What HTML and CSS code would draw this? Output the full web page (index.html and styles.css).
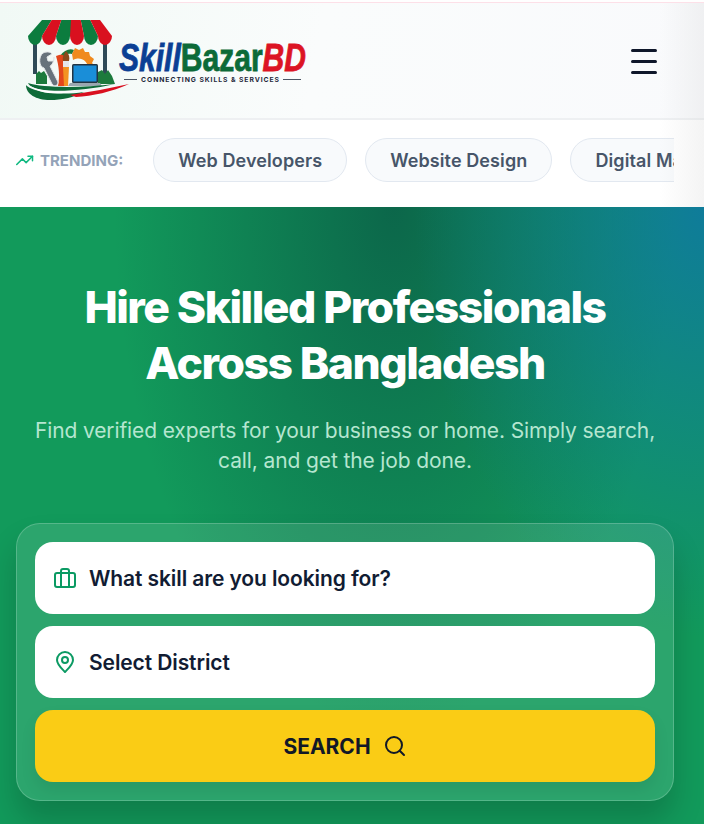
FILE: index.html
```html
<!DOCTYPE html>
<html lang="en">
<head>
    <meta charset="UTF-8" />
    <meta name="viewport" content="width=device-width, initial-scale=1.0" />
    <title>SkillBazarBD - Hire Skilled Professionals</title>
    <link rel="stylesheet" href="styles.css">
</head>
<body>
    <header class="site-header">
        <a class="brand" href="#">
            <svg class="brand-logo" width="290" height="88" viewBox="24 17 290 88">
                <!-- poles and bushes -->
                <rect x="33" y="42" width="4" height="32" fill="#2f4a57"/>
                <rect x="103" y="42" width="4" height="32" fill="#2f4a57"/>
                <path d="M36 84 V74 l3 -3 l2 2 l3 -2 l3 5 V84 Z" fill="#1c7a3c"/>
                <path d="M98 84 V72 l4 -2 l3 4 l3 -4 l4 6 l3 8 Z" fill="#1c7a3c"/>
                <!-- gear -->
                <path d="M60 56 C64 50 70 48 74 50 L72 54 C68 53 65 54 62 58 Z" fill="#1c7a3c"/>
                <path d="M72 54 L75 48 L79 50 L83 48 L85 52 L89 52 L90 56 L94 59 L92 63 L95 66 L88 66 A10 10 0 0 0 73 60 Z" fill="#f08a1d"/>
                <!-- tools -->
                <path d="M56 56 C60 55 62 54 64 56 L66 86 H58 C60 76 59 66 56 56 Z" fill="#e2461c"/>
                <path d="M66 51 C69 54 70 57 69 61 H63 C62 57 64 54 66 51 Z" fill="#8a4a1c"/>
                <rect x="63" y="61" width="6" height="6" fill="#e5e7eb"/>
                <path d="M63 67 H69 L68 86 H64 Z" fill="#f39321"/>
                <path d="M43 53 C47 51 51 52 52 54 L47 57 L48 61 L53 61 C54 59 54 58 54 57 C54 62 52 65 50 66 L58 82 C58 86 54 87 52 84 L44 68 C39 67 38 57 43 53 Z" fill="#67727b" stroke="#e5e8ea" stroke-width="1"/>
                <!-- laptop -->
                <rect x="72" y="64" width="26" height="19" rx="1.500" fill="#223544"/>
                <rect x="73.500" y="65.500" width="23" height="16" fill="#1a8ed8"/>
                <path d="M70 83 H100 L102 86 H68 Z" fill="#9aa7b0"/>
                <!-- swoosh -->
                <path d="M28 83 C44 88 80 88 115 84 C90 90 60 92 44 90 C36 89 30 87 28 83 Z" fill="#0f6b39"/>
                <path d="M26 85 C32 92 60 96 84 92 C72 98 62 100 50 100 C36 100 26 94 26 85 Z" fill="#0e6b38"/>
                <path d="M30 86 C42 92 60 93 78 90 C62 95 40 95 30 86 Z" fill="#ffffff"/>
                <path d="M70 95 C90 92 110 88 129 84 C112 92 92 96 76 97 Z" fill="#d9101f"/>
                <!-- awning -->
                <path d="M42 20 H51.700 L42 36 H28 Z M61.300 20 H71 V36 H56 Z M80.700 20 H90.300 L98 36 H84 Z" fill="#0c7c3e"/>
                <path d="M51.700 20 H61.300 L56 36 H42 Z M71 20 H80.700 L84 36 H70 Z M90.300 20 H100 L112 36 H98 Z" fill="#d9101f"/>
                <path d="M28 36 a7 9 0 0 0 14 0 Z M56 36 a7 9 0 0 0 14 0 Z M84 36 a7 9 0 0 0 14 0 Z" fill="#0c7c3e"/>
                <path d="M42 36 a7 9 0 0 0 14 0 Z M70 36 a7 9 0 0 0 14 0 Z M98 36 a7 9 0 0 0 14 0 Z" fill="#d9101f"/>
                <!-- wordmark -->
                <text class="logo-name" x="119" y="71" textLength="187" lengthAdjust="spacingAndGlyphs"><tspan class="logo-skill">Skill</tspan><tspan class="logo-bazar">Bazar</tspan><tspan class="logo-bd">BD</tspan></text>
                <rect x="124" y="79" width="13" height="1" fill="#4b5563"/>
                <rect x="283" y="79" width="18" height="1" fill="#4b5563"/>
                <text class="logo-tag" x="141" y="82" textLength="138" lengthAdjust="spacing">CONNECTING SKILLS &amp; SERVICES</text>
            </svg>
        </a>
        <button class="menu-btn" aria-label="Menu">
            <span></span><span></span><span></span>
        </button>
    </header>

    <div class="trending">
        <div class="trending-label">
            <svg width="18" height="18" viewBox="0 0 24 24" fill="none" stroke="#10b981" stroke-width="2" stroke-linecap="round" stroke-linejoin="round">
                <path d="M1 18 L8.500 10.500 L13.500 15.500 L22 7"/>
                <path d="M16 7 H22 V13"/>
            </svg>
            <span>TRENDING:</span>
        </div>
        <div class="trending-list">
            <a class="chip" href="#">Web Developers</a>
            <a class="chip" href="#">Website Design</a>
            <a class="chip" href="#">Digital Marketing</a>
        </div>
    </div>

    <section class="hero">
        <h1>Hire Skilled Professionals<br>Across Bangladesh</h1>
        <p>Find verified experts for your business or home. Simply search, call, and get the job done.</p>

        <div class="search-card">
            <div class="field">
                <svg width="24" height="24" viewBox="0 0 24 24" fill="none" stroke="#0b9a63" stroke-width="2" stroke-linejoin="round">
                    <rect x="2" y="7" width="20" height="14" rx="2"/>
                    <path d="M8 21 V5 a2 2 0 0 1 2 -2 h4 a2 2 0 0 1 2 2 V21"/>
                </svg>
                <span>What skill are you looking for?</span>
            </div>
            <div class="field">
                <svg width="24" height="24" viewBox="0 0 24 24" fill="none" stroke="#0b9a63" stroke-width="2" stroke-linejoin="round">
                    <path d="M12 22 C8 18 4 14.500 4 10 a8 8 0 0 1 16 0 C20 14.500 16 18 12 22 Z"/>
                    <circle cx="12" cy="10" r="3"/>
                </svg>
                <span>Select District</span>
            </div>
            <button class="search-btn">
                SEARCH
                <svg width="24" height="24" viewBox="0 0 24 24" fill="none" stroke="#111827" stroke-width="2" stroke-linecap="round">
                    <circle cx="11" cy="11" r="8"/>
                    <path d="M21 21 L16.700 16.700"/>
                </svg>
            </button>
        </div>
    </section>

    <div class="edge-shade"></div>
</body>
</html>
```

FILE: styles.css
```css
* {
    box-sizing: border-box;
}

body {
    margin: 0;
    height: 824px;
    overflow: hidden;
    position: relative;
    font-family: 'Inter', 'Noto Sans', sans-serif;
    background-color: #ffffff;
}

.site-header {
    height: 118px;
    margin-top: 2px;
    padding: 0 47px 0 0;
    display: flex;
    justify-content: space-between;
    align-items: center;
    border-top: 1px solid #fde0e8;
    border-bottom: 2px solid #eef0f2;
    background: linear-gradient(100deg, #f1f9f5 0%, #fafcfc 45%, #f9fafc 100%);
}

.brand {
    display: flex;
    margin-left: 24px;
    text-decoration: none;
}

.logo-name {
    font-family: 'Liberation Sans', sans-serif;
    font-weight: bold;
    font-size: 38px;
    stroke-width: 0.8px;
}

.logo-skill {
    font-style: italic;
    fill: #0b3f94;
    stroke: #0b3f94;
}

.logo-bazar {
    fill: #0c6a38;
    stroke: #0c6a38;
}

.logo-bd {
    font-style: italic;
    fill: #dc1424;
    stroke: #dc1424;
}

.logo-tag {
    font-size: 6.800px;
    font-weight: 700;
    fill: #1e293b;
}

.menu-btn {
    width: 26px;
    margin-top: 1px;
    padding: 0;
    border: none;
    background: none;
    display: flex;
    flex-direction: column;
    gap: 8px;
}

.menu-btn span {
    height: 3px;
    border-radius: 2px;
    background-color: #0f172a;
}

.trending {
    height: 87px;
    padding: 0 30px 7px 16px;
    display: flex;
    align-items: center;
    gap: 30px;
    background-color: #ffffff;
}

.trending-label {
    display: flex;
    align-items: center;
    gap: 6px;
    flex-shrink: 0;
    font-size: 15px;
    font-weight: 700;
    color: #94a3b8;
}

.trending-list {
    display: flex;
    gap: 18px;
    overflow: hidden;
}

.chip {
    flex-shrink: 0;
    height: 44px;
    padding: 0 24px;
    display: flex;
    align-items: center;
    font-size: 18px;
    font-weight: 600;
    letter-spacing: 0.100px;
    color: #475569;
    text-decoration: none;
    background-color: #f8fafc;
    border: 1px solid #e2e8f0;
    border-radius: 22px;
}

.hero {
    height: 617px;
    padding: 72px 30px 0 16px;
    text-align: center;
    background:
        radial-gradient(ellipse 290px 430px at 100% 0%, rgba(14, 116, 170, 0.8), rgba(14, 116, 170, 0) 100%),
        radial-gradient(ellipse 280px 520px at 56% 0%, rgba(10, 90, 70, 0.8), rgba(10, 90, 70, 0) 100%),
        #129a5b;
}

.hero h1 {
    margin: 0;
    font-size: 44.500px;
    line-height: 56px;
    font-weight: 800;
    letter-spacing: -1.500px;
    color: #ffffff;
}

.hero p {
    margin: 25px 0 0;
    font-size: 21px;
    line-height: 30px;
    letter-spacing: -0.120px;
    color: #b5e6d0;
}

.search-card {
    margin-top: 47px;
    padding: 18px;
    display: flex;
    flex-direction: column;
    gap: 12px;
    background-color: rgba(255, 255, 255, 0.11);
    border: 1px solid rgba(255, 255, 255, 0.2);
    border-radius: 24px;
    box-shadow: 0 20px 30px rgba(0, 0, 0, 0.18);
}

.field {
    height: 72px;
    padding: 0 18px;
    display: flex;
    align-items: center;
    gap: 12px;
    background-color: #ffffff;
    border-radius: 18px;
    font-size: 21px;
    font-weight: 600;
    letter-spacing: -0.100px;
    color: #111c33;
}

.search-btn {
    height: 72px;
    display: flex;
    align-items: center;
    justify-content: center;
    gap: 12px;
    border: none;
    border-radius: 18px;
    background-color: #facc15;
    font-family: inherit;
    font-size: 21px;
    font-weight: 700;
    color: #111827;
    box-shadow: 0 8px 16px rgba(0, 0, 0, 0.08);
}

.edge-shade {
    position: absolute;
    top: 3px;
    right: 0;
    width: 44px;
    height: 204px;
    background: linear-gradient(to right, rgba(200, 200, 200, 0), rgba(200, 200, 200, 0.2));
}
```
